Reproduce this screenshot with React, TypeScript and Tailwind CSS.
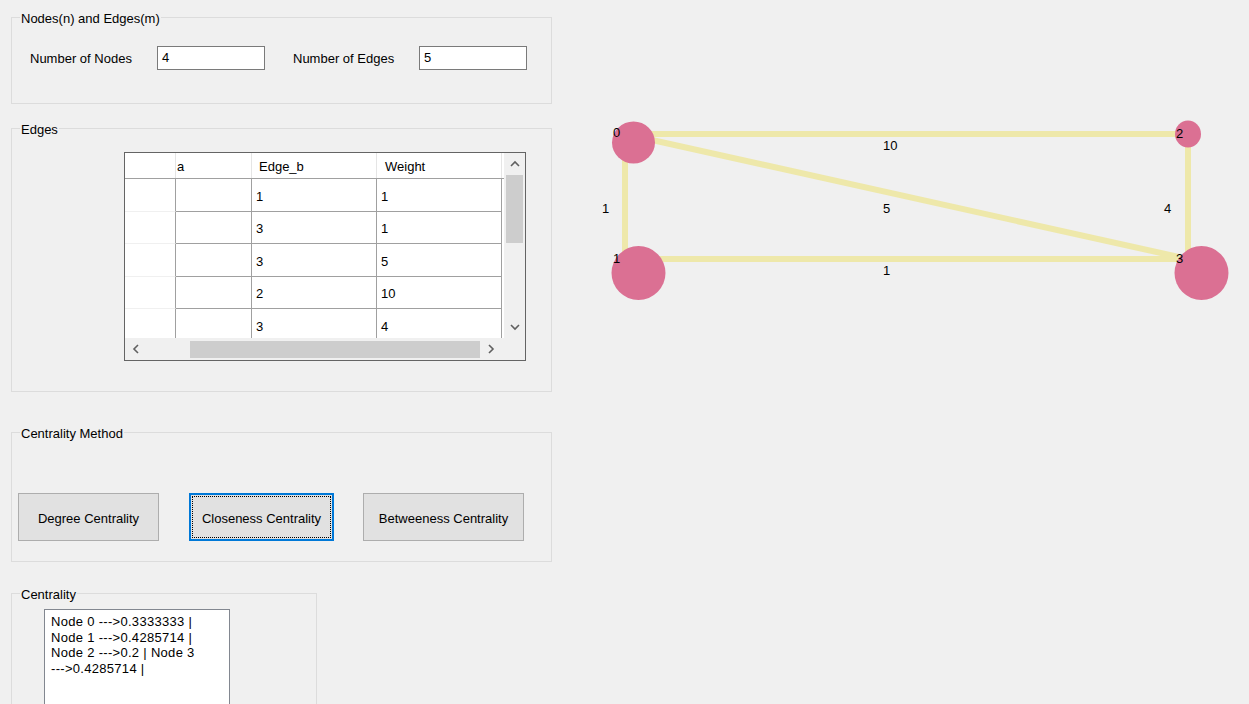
import React from "react";

const font = { fontFamily: '"Liberation Sans", Arial, sans-serif' };

function Group({
  label,
  className,
  children,
}: {
  label: string;
  className: string;
  children?: React.ReactNode;
}) {
  return (
    <div className={"relative shrink-0 border border-[#dcdcdc] " + className}>
      <span className="absolute left-[8px] top-[-7px] bg-[#f0f0f0] px-[1px] text-[13px] leading-[16px] text-black">
        {label}
      </span>
      {children}
    </div>
  );
}

const rows = [
  ["1", "1"],
  ["3", "1"],
  ["3", "5"],
  ["2", "10"],
  ["3", "4"],
];

function Chevron({ dir }: { dir: "up" | "down" | "left" | "right" }) {
  const d =
    dir === "up"
      ? "M1 6 L5 2 L9 6"
      : dir === "down"
      ? "M1 2 L5 6 L9 2"
      : dir === "left"
      ? "M6 1 L2 5 L6 9"
      : "M2 1 L6 5 L2 9";
  const w = dir === "up" || dir === "down" ? 10 : 8;
  const h = dir === "up" || dir === "down" ? 8 : 10;
  return (
    <svg width={w} height={h} viewBox={`0 0 ${w} ${h}`}>
      <path d={d} fill="none" stroke="#606060" strokeWidth="1.6" />
    </svg>
  );
}

function EdgeTable() {
  return (
    <div className="flex h-[209px] w-[402px] flex-col border border-[#646464] bg-white">
      <div className="flex h-[185px]">
        <div className="flex w-[379px] flex-col overflow-hidden">
          {/* header */}
          <div className="flex h-[26px] shrink-0 border-b border-[#a0a0a0]">
            <div className="w-[51px] border-r border-[#e5e5e5]" />
            <div className="w-[76px] border-r border-[#e5e5e5] pl-[1px] pt-[6px] text-[13px] leading-[16px]">
              a
            </div>
            <div className="w-[125px] border-r border-[#e5e5e5] pl-[7px] pt-[6px] text-[13px] leading-[16px]">
              Edge_b
            </div>
            <div className="w-[125px] border-r border-[#e5e5e5] pl-[8px] pt-[6px] text-[13px] leading-[16px]">
              Weight
            </div>
          </div>
          {rows.map((r, i) => (
            <div key={i} className="flex h-[32.5px] shrink-0">
              <div className="w-[51px] border-b border-r border-[#f0f0f0] border-r-[#a0a0a0]" />
              <div className="w-[76px] border-b border-r border-[#a0a0a0]" />
              <div className="flex w-[125px] items-center border-b border-r border-[#a0a0a0] pl-[4px] pt-[3px] text-[13px]">
                {r[0]}
              </div>
              <div className="flex w-[125px] items-center border-b border-r border-[#a0a0a0] pl-[4px] pt-[3px] text-[13px]">
                {r[1]}
              </div>
            </div>
          ))}
        </div>
        <div className="flex w-[21px] flex-col items-center bg-[#f0f0f0]">
          <div className="flex h-[22px] items-center justify-center">
            <Chevron dir="up" />
          </div>
          <div className="h-[68px] w-[17px] bg-[#cdcdcd]" />
          <div className="flex-1" />
          <div className="flex h-[22px] items-center justify-center">
            <Chevron dir="down" />
          </div>
        </div>
      </div>
      <div className="flex h-[22px] items-center bg-[#f0f0f0]">
        <div className="flex w-[21px] justify-center">
          <Chevron dir="left" />
        </div>
        <div className="ml-[44px] h-[17px] w-[290px] bg-[#cdcdcd]" />
        <div className="flex w-[22px] justify-center">
          <Chevron dir="right" />
        </div>
      </div>
    </div>
  );
}

function Graph() {
  const line = "#eee8aa";
  const node = "#db7093";
  return (
    <svg width="697" height="704" viewBox="552 0 697 704" className="block shrink-0">
      <g stroke={line} strokeWidth="6" fill="none">
        <line x1="625" y1="134" x2="1188" y2="134" />
        <line x1="625" y1="134" x2="625" y2="259" />
        <line x1="625" y1="259" x2="1188" y2="259" />
        <line x1="1188" y1="134" x2="1188" y2="259" />
        <line x1="625" y1="134" x2="1188" y2="259" />
      </g>
      <g fill={node}>
        <ellipse cx="633.5" cy="142.5" rx="21.5" ry="21" />
        <ellipse cx="1188" cy="134" rx="13" ry="13.5" />
        <ellipse cx="638.5" cy="273" rx="27" ry="27" />
        <ellipse cx="1201.5" cy="273" rx="27" ry="27" />
      </g>
      <g fill="#000" fontSize="13" style={font}>
        <text x="613" y="137">0</text>
        <text x="1176" y="138">2</text>
        <text x="613" y="263">1</text>
        <text x="1176" y="263">3</text>
        <text x="883" y="150">10</text>
        <text x="602" y="213">1</text>
        <text x="883" y="213">5</text>
        <text x="1164" y="213">4</text>
        <text x="883" y="275">1</text>
      </g>
    </svg>
  );
}

export default function App() {
  return (
    <div
      className="flex h-[704px] w-[1249px] overflow-hidden bg-[#f0f0f0] text-[13px] text-black"
      style={font}
    >
      <div className="flex w-[552px] shrink-0 flex-col pl-[11px]">
        <Group label="Nodes(n) and Edges(m)" className="mt-[17px] h-[87px] w-[541px]">
          <div className="flex items-center pl-[18px] pt-[28px]">
            <span className="w-[127px] pt-[1px]">Number of Nodes</span>
            <div className="h-[24px] w-[108px] border border-[#7a7a7a] bg-white pl-[4px] leading-[22px]">
              4
            </div>
            <span className="ml-[28px] w-[126px] pt-[1px]">Number of Edges</span>
            <div className="h-[24px] w-[108px] border border-[#7a7a7a] bg-white pl-[4px] leading-[22px]">
              5
            </div>
          </div>
        </Group>

        <Group label="Edges" className="mt-[24px] h-[264px] w-[541px]">
          <div className="pl-[112px] pt-[23px]">
            <EdgeTable />
          </div>
        </Group>

        <Group label="Centrality Method" className="mt-[40px] h-[130px] w-[541px]">
          <div className="flex items-center pl-[6px] pt-[60px]">
            <button className="h-[48px] w-[141px] border border-[#adadad] bg-[#e1e1e1] pt-[3px] text-[13px]">
              Degree Centrality
            </button>
            <button className="ml-[30px] flex h-[48px] w-[145px] items-center justify-center border-2 border-[#0078d7] bg-[#e1e1e1] p-[1px] text-[13px]">
              <span className="flex h-full w-full items-center justify-center border border-dotted border-black pt-[3px]">
                Closeness Centrality
              </span>
            </button>
            <button className="ml-[29px] h-[48px] w-[161px] border border-[#adadad] bg-[#e1e1e1] pt-[3px] text-[13px]">
              Betweeness Centrality
            </button>
          </div>
        </Group>

        <Group label="Centrality" className="mt-[31px] h-[140px] w-[306px]">
          <div className="pl-[32px] pt-[15px]">
            <div className="h-[120px] w-[186px] border border-[#828790] bg-white pl-[6px] pt-[4px] text-[13px] leading-[15.5px] tracking-[0.3px]">
              <div>Node 0 ---&gt;0.3333333 |</div>
              <div>Node 1 ---&gt;0.4285714 |</div>
              <div>Node 2 ---&gt;0.2 | Node 3</div>
              <div>---&gt;0.4285714 |</div>
            </div>
          </div>
        </Group>
      </div>
      <Graph />
    </div>
  );
}
